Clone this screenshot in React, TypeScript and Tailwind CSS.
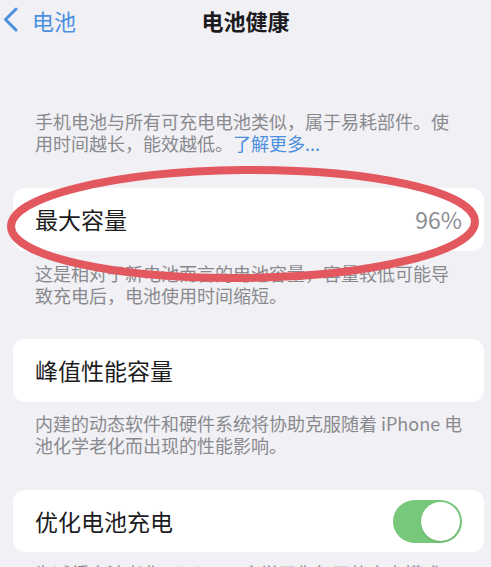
import React from 'react';

const cjk = { fontFamily: '"Noto Sans CJK SC", "Noto Sans", sans-serif' };

const Note: React.FC<{ children: React.ReactNode; className?: string }> = ({ children, className = '' }) => (
  <p className={`pl-[35px] pr-[28px] text-[18px] leading-[22px] text-[#8a8a8e] ${className}`}>{children}</p>
);

const Row: React.FC<{ children: React.ReactNode; className?: string }> = ({ children, className = '' }) => (
  <div className={`mx-[13px] w-[471px] bg-white rounded-xl pl-[22px] pr-[22px] flex items-center justify-between ${className}`}>
    {children}
  </div>
);

export default function App() {
  return (
    <div className="relative h-[567px] w-[491px] overflow-hidden bg-[#f0f0f5]" style={cjk}>
      {/* nav bar */}
      <div className="relative h-10 flex items-center">
        <div className="flex items-center pl-[3px] text-[#4a8fe0]">
          <svg width="16" height="26" viewBox="0 0 16 26" fill="none">
            <path d="M13 2 L2.5 12.5 L13 23" stroke="#4a8fe0" strokeWidth="3" strokeLinecap="round" strokeLinejoin="round" />
          </svg>
          <span className="ml-[13px] text-[22px] leading-none">电池</span>
        </div>
        <h1 className="absolute left-0 right-0 text-center text-[22px] font-bold leading-none text-[#1c1c1e]">电池健康</h1>
      </div>

      <div className="mt-[70px]">
        <Note>
          手机电池与所有可充电电池类似，属于易耗部件。使用时间越长，能效越低。<span className="text-[#4a8fe0]">了解更多...</span>
        </Note>

        <Row className="mt-[34px] h-[63px]">
          <span className="text-[23px] text-[#1c1c1e]">最大容量</span>
          <span className="text-[23px] text-[#8e8e93]">96%</span>
        </Row>
        <Note className="mt-[11px]">这是相对于新电池而言的电池容量，容量较低可能导致充电后，电池使用时间缩短。</Note>

        <Row className="mt-[33px] h-[63px]">
          <span className="text-[23px] text-[#1c1c1e]">峰值性能容量</span>
        </Row>
        <Note className="mt-[10px]">内建的动态软件和硬件系统将协助克服随着 iPhone 电池化学老化而出现的性能影响。</Note>

        <Row className="mt-[34px] h-[62px]">
          <span className="text-[23px] text-[#1c1c1e]">优化电池充电</span>
          <div className="w-[69px] h-[43px] rounded-full bg-[#78c87c] flex items-center justify-end pr-[2px]">
            <div className="w-[39px] h-[39px] rounded-full bg-white shadow-sm" />
          </div>
        </Row>
        <Note className="mt-[10px]">为减缓电池老化，iPhone 会学习您每天的充电模式，以便在您需要使用 iPhone 之前再完成充电。</Note>
      </div>

      {/* red hand-drawn annotation */}
      <svg className="pointer-events-none absolute left-0 top-0" width="491" height="567" viewBox="0 0 491 567">
        <ellipse cx="243" cy="224" rx="232" ry="54" fill="none" stroke="#e3585e" strokeWidth="8" transform="rotate(-0.6 243 224)" />
      </svg>
    </div>
  );
}
